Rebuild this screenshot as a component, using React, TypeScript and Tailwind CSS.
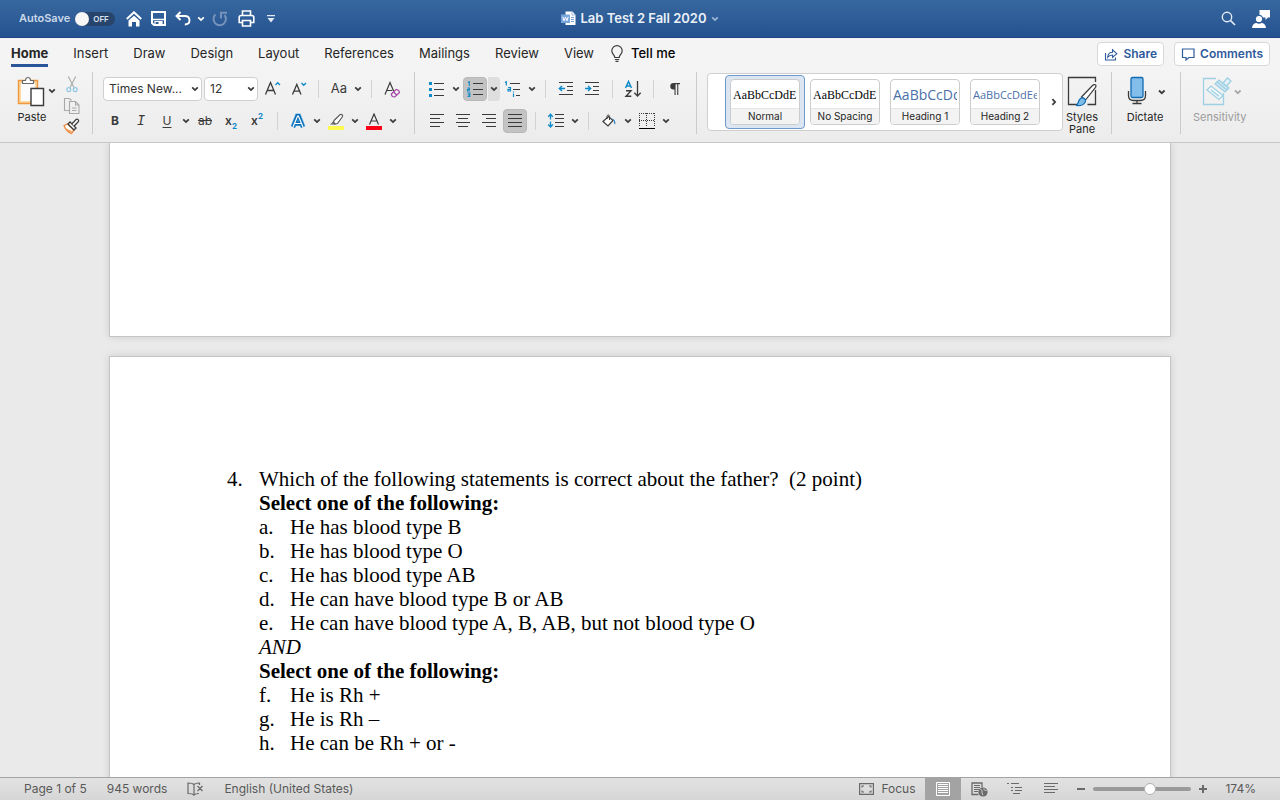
import React from 'react';
import clsx from 'clsx';

const INK = '#3b3b3b';
const BLUE = '#0f8ac8';

/* ---------- Small building blocks ---------- */

const Chevron: React.FC<{ className?: string }> = ({ className }) => (
  <svg width="8" height="6" viewBox="0 0 8 6" fill="none" stroke="currentColor" strokeWidth="1.8" className={className}>
    <path d="M1.2 1.4 4 4.1l2.8-2.7" />
  </svg>
);

interface ToolProps {
  label: string;
  active?: boolean;
  children: React.ReactNode;
}

const Tool: React.FC<ToolProps> = ({ label, active, children }) => (
  <button
    type="button"
    aria-label={label}
    className={clsx(
      'flex h-6 shrink-0 items-center justify-center text-[#3b3b3b]',
      active ? 'mx-px w-6 rounded-sm border border-[#b8b8b8] bg-[#c3c3c3]' : 'w-[26px]'
    )}
  >
    {children}
  </button>
);

const MenuArrow: React.FC<{ label: string; active?: boolean }> = ({ label, active }) => (
  <button
    type="button"
    aria-label={label}
    className={clsx('flex h-6 w-3 shrink-0 items-center justify-center text-[#3b3b3b]', active && 'rounded-r-sm bg-[#dedede]')}
  >
    <Chevron />
  </button>
);

const Divider = () => <div className="mx-[7px] h-[18px] w-px shrink-0 bg-[#d2d2d2]" />;

const GroupDivider: React.FC<{ className?: string }> = ({ className }) => (
  <div className={clsx('h-[62px] w-px shrink-0 bg-[#cbcbcb]', className)} />
);

// Horizontal strokes used by the list and alignment icons: [x1, x2, y]
const Lines: React.FC<{ rows: number[][]; color?: string }> = ({ rows, color = INK }) => (
  <g stroke={color} strokeWidth="1" shapeRendering="crispEdges">
    {rows.map(([x1, x2, y]) => (
      <line key={`${x1}-${y}`} x1={x1} x2={x2} y1={y + 0.5} y2={y + 0.5} />
    ))}
  </g>
);

const LineIcon: React.FC<{ rows: number[][]; children?: React.ReactNode }> = ({ rows, children }) => (
  <svg width="18" height="16" viewBox="0 0 18 16" fill="none">
    <Lines rows={rows} />
    {children}
  </svg>
);

/* ---------- Title bar ---------- */

const TitleBar = () => (
  <header className="grid h-[38px] shrink-0 grid-cols-[1fr_auto_1fr] items-center border-b border-[#1f4680] bg-linear-to-b from-[#38689f] to-[#245290] text-white">
    <div className="flex items-center pl-[19px]">
      <label className="flex items-center gap-[5px] text-[11px] font-semibold text-[#cbd8e8]">
        AutoSave
        <input type="checkbox" className="sr-only" />
        <span className="flex h-[14px] w-10 items-center gap-1 rounded-full bg-[#27446c] text-[8px] text-[#dbe3ee]">
          <span className="size-[14px] rounded-full bg-[#f6f6f6]" />
          OFF
        </span>
      </label>
      <div className="ml-1.5 flex items-center">
        <button type="button" aria-label="Home" className="flex w-[25px] justify-center">
          <svg width="16" height="16" viewBox="0 0 16 16" fill="none" stroke="#fff">
            <path d="M.8 8 8 1.3 15.200 8" strokeWidth="2" />
            <path d="M2.500 9.500 8 4.700l5.500 4.800V15.500H10v-4.500H6v4.500H2.500z" fill="#fff" stroke="none" />
          </svg>
        </button>
        <button type="button" aria-label="Save" className="flex w-[25px] justify-center">
          <svg width="15" height="15" viewBox="0 0 15 15" fill="none">
            <path d="M1 1h13v13H3l-2-2z" stroke="#fff" strokeWidth="2" />
            <path d="M1 8.500h13" stroke="#fff" strokeWidth="1.500" />
            <path d="M4 14v-3.500h7V14" stroke="#fff" strokeWidth="1.200" />
            <path d="M7.500 11h3.500v3.500H7.500z" fill="#fff" />
          </svg>
        </button>
        <button type="button" aria-label="Undo" className="flex w-6 justify-center">
          <svg width="16" height="15" viewBox="0 0 16 15" fill="none" stroke="#fff" strokeWidth="1.900">
            <path d="M5.500 1 1.500 5l4 4M2 5h7.500c3 0 5 1.800 5 4.300 0 2.600-2 4.200-4.700 4.200" />
          </svg>
        </button>
        <button type="button" aria-label="Undo history" className="flex w-3 justify-center">
          <Chevron />
        </button>
        <button type="button" aria-label="Repeat" disabled className="flex w-[26px] justify-center">
          <svg width="16" height="16" viewBox="0 0 16 16" fill="none" stroke="#7793bb" strokeWidth="2">
            <path d="M3.500 3.400A6.200 6.200 0 1 0 12.500 4M9 7.500V1.800h6" />
          </svg>
        </button>
        <button type="button" aria-label="Print" className="flex w-[26px] justify-center">
          <svg width="17" height="17" viewBox="0 0 17 17" fill="none" stroke="#fff" strokeWidth="1.600">
            <path d="M4.500 5.500V1h8v4.500M4 12.500H1.200v-5c0-1.200.7-2 2-2h10.600c1.300 0 2 .8 2 2v5H13" />
            <path d="M4.500 10.500h8V16h-8z" />
          </svg>
        </button>
        <button type="button" aria-label="Customize toolbar" className="flex w-6 justify-center">
          <svg width="8" height="8" viewBox="0 0 8 8" fill="#e3eaf3">
            <path d="M0 0h8v1.300H0zM.5 3h7L4 7.500z" />
          </svg>
        </button>
      </div>
    </div>

    <button type="button" className="flex items-center gap-1 text-[13px] font-semibold text-[#eaf0f7]">
      <svg width="15" height="15" viewBox="0 0 15 15">
        <path d="M4.500.5h7L14.500 4v10h-10z" fill="#fff" />
        <path d="M11 .5V4h3.500" fill="none" stroke="#9db7d8" />
        <path d="M10 6.500h3M10 8.500h3M10 10.500h3" stroke="#7ea3d2" />
        <path d="M0 3.500h9v8.500H0z" fill="#78a6dc" />
        <path d="M1.800 5.800 3 9.800l1.500-3.600L6 9.800l1.200-4" fill="none" stroke="#fff" />
      </svg>
      <span className="pt-px">Lab Test 2 Fall 2020</span>
      <Chevron className="text-[#9ab4d6]" />
    </button>

    <div className="flex items-center justify-end gap-4 pr-2.5">
      <button type="button" aria-label="Search">
        <svg width="15" height="15" viewBox="0 0 15 15" fill="none" stroke="#e4ebf4" strokeWidth="1.400">
          <circle cx="6" cy="6" r="4.700" />
          <path d="m9.500 9.500 4.500 4.500" strokeWidth="1.700" />
        </svg>
      </button>
      <button type="button" aria-label="Account">
        <svg width="18" height="18" viewBox="0 0 18 18" fill="#fff">
          <path d="M7.500 0H18v7.500h-2L13.500 10V7.500H11A4 4 0 0 0 7.500 4.800z" />
          <circle cx="7" cy="9" r="3.100" />
          <path d="M0 18c.3-3.300 2.300-5 4.500-5 1.400 1 3.600 1 5 0 2.200 0 4.200 1.700 4.500 5z" />
        </svg>
      </button>
    </div>
  </header>
);

/* ---------- Tabs ---------- */

const tabs = ['Home', 'Insert', 'Draw', 'Design', 'Layout', 'References', 'Mailings', 'Review', 'View'];

const TabBar = () => (
  <div className="flex h-[30px] shrink-0 items-center bg-[#f4f4f4] pr-2.5 pl-[11px] text-[13px]">
    <nav className="flex h-full items-center gap-[25px] text-[#262626]">
      {tabs.map((tab) => (
        <button
          key={tab}
          type="button"
          className={clsx('h-[28px] border-b-[3px] pt-[5px]', tab === 'Home' ? 'border-[#2a5699] font-bold' : 'border-transparent')}
        >
          {tab}
        </button>
      ))}
    </nav>
    <button type="button" className="ml-[17px] flex items-center gap-2 font-medium text-black">
      <svg width="12" height="17" viewBox="0 0 12 17" fill="none" stroke={INK} strokeWidth="1.200">
        <path d="M3.800 12.500c0-2.300-3-3.500-3-6.700a5.200 5.200 0 0 1 10.400 0c0 3.200-3 4.400-3 6.700zM3.800 14.500h4.400M4.500 16.300h3" />
      </svg>
      <span className="pt-0.5">Tell me</span>
    </button>
    <div className="ml-auto flex gap-2.5 pt-0.5 text-[12px] font-semibold text-[#2f5a9b]">
      <button type="button" className="flex h-6 items-center gap-1 rounded-sm border border-[#d8d8d8] bg-white px-1.5">
        <svg width="15" height="13" viewBox="0 0 15 13" fill="none" stroke="currentColor" strokeWidth="1.100">
          <path d="M1.500 5v7h10V9.500" />
          <path d="M3.800 9.300c.2-3.300 2-5 4.700-5V1.800l4.300 3.900-4.300 3.700V7c-2 0-3.500.6-4.700 2.300z" />
        </svg>
        Share
      </button>
      <button type="button" className="flex h-6 items-center gap-1 rounded-sm border border-[#d8d8d8] bg-white px-1.5">
        <svg width="15" height="13" viewBox="0 0 15 13" fill="none" stroke="currentColor" strokeWidth="1.200">
          <path d="M1.500 1H13v8.500H8L5 12V9.500H1.500z" />
        </svg>
        Comments
      </button>
    </div>
  </div>
);

/* ---------- Ribbon groups ---------- */

const ClipboardGroup = () => (
  <div className="flex w-20 shrink-0 items-start pt-1">
    <button type="button" className="flex w-[30px] flex-col items-center gap-1 text-[11px] leading-3 text-[#262626]">
      <svg width="30" height="31" viewBox="0 0 30 31" fill="none">
        <path d="M1.500 4.500h19v23h-19z" fill="#fbd9a0" stroke="#f0963f" strokeWidth="1.400" />
        <path d="M4 7h14v18H4z" fill="#fbfbfb" />
        <path d="M5.500 7.500v-3h3c0-4 5-4 5 0h3v3z" fill="#fff" stroke="#6b6b6b" strokeWidth="1.200" />
        <path d="M14 12.500h12.500v17H14z" fill="#fff" stroke={INK} strokeWidth="1.400" />
      </svg>
      Paste
    </button>
    <button type="button" aria-label="Paste options" className="flex w-2.5 justify-center pt-3 text-[#3b3b3b]">
      <Chevron />
    </button>
    <div className="ml-1.5 flex flex-col items-center gap-1">
      <button type="button" aria-label="Cut" disabled>
        <svg width="12" height="17" viewBox="0 0 12 17" fill="none" strokeWidth="1.100">
          <path d="M2.300.5 8 11.500M9.700.5 4 11.500" stroke="#a9a9a9" />
          <circle cx="2.800" cy="13.600" r="2" stroke="#8cc5e4" />
          <circle cx="9.200" cy="13.600" r="2" stroke="#8cc5e4" />
        </svg>
      </button>
      <button type="button" aria-label="Copy" disabled>
        <svg width="17" height="17" viewBox="0 0 17 17" fill="none" stroke="#a9a9a9" strokeWidth="1.100">
          <path d="M6.500 13.500h-5V1.500h5l2 2" />
          <path d="M6.500 4.500h6l3.500 3.500v8.500H6.500zM12.500 4.500V8H16M9 11h4.500M9 13.500h4.500" />
        </svg>
      </button>
      <button type="button" aria-label="Format painter">
        <svg width="17" height="17" viewBox="0 0 17 17" fill="none">
          <path d="M1 7.500 4.500 6 11 12 8.500 15.500c-3-1-6-4-7.500-8z" fill="#fff" stroke="#f0853c" strokeWidth="1.300" />
          <path d="M3 10.500 9 13l-.8 2C6 14 4.300 12.500 3 10.500z" fill="#f6a25c" />
          <path d="m5 6 2-2 6 6-2 2z" fill="#fff" stroke={INK} strokeWidth="1.300" />
          <path d="m9 5.800 4.300-4.500c1.500-.5 2.700.7 2.200 2.200L11.200 8" fill="#fff" stroke={INK} strokeWidth="1.300" />
        </svg>
      </button>
    </div>
  </div>
);

interface ComboProps {
  label: string;
  value: string;
  className: string;
}

const Combo: React.FC<ComboProps> = ({ label, value, className }) => (
  <div className={clsx('relative shrink-0', className)}>
    <select
      aria-label={label}
      className="block h-6 w-full appearance-none rounded-sm border border-[#cfcfcf] bg-white pl-[5px] text-[12px] text-[#333333]"
    >
      <option>{value}</option>
    </select>
    <Chevron className="pointer-events-none absolute top-[9px] right-[3px] text-[#3b3b3b]" />
  </div>
);

const FontGroup = () => (
  <div className="flex shrink-0 flex-col gap-2 pt-[5px]">
    <div className="flex items-center">
      <div className="mr-px ml-px flex gap-0.5">
        <Combo label="Font" value="Times New..." className="w-[99px]" />
        <Combo label="Font size" value="12" className="w-[54px]" />
      </div>
      <Tool label="Increase font size">
        <svg width="17" height="16" viewBox="0 0 17 16" fill="none">
          <path d="M1.500 13.500 6.500 1.500l5 12M3.200 9.500h6.600" stroke={INK} strokeWidth="1.300" />
          <path d="m11.500 4 2.200-2.200L16 4" stroke={BLUE} strokeWidth="1.400" />
        </svg>
      </Tool>
      <Tool label="Decrease font size">
        <svg width="17" height="16" viewBox="0 0 17 16" fill="none">
          <path d="M2.500 13.500 6.800 3.500l4.200 10M3.900 10.200h5.600" stroke={INK} strokeWidth="1.300" />
          <path d="m11.500 2 2.200 2.200L16 2" stroke={BLUE} strokeWidth="1.400" />
        </svg>
      </Tool>
      <Divider />
      <Tool label="Change case">
        <span className="text-[13px]">Aa</span>
      </Tool>
      <MenuArrow label="Change case options" />
      <Divider />
      <Tool label="Clear formatting">
        <svg width="17" height="17" viewBox="0 0 17 17" fill="none">
          <path d="M1 13.500 6 1.500l3.600 8.500M2.700 9.500h5.500" stroke={INK} strokeWidth="1.200" />
          <path d="m7.300 13 4.700-4.500c1.600-.2 3.300 1.300 3.500 3L10.800 16c-1.700 0-3.400-1.300-3.500-3z" fill="#f0f0f0" stroke="#a345a8" strokeWidth="1.200" />
          <path d="m9.500 11 3.300 3" stroke="#a345a8" strokeWidth="1.200" />
        </svg>
      </Tool>
    </div>
    <div className="flex items-center text-[12px]">
      <Tool label="Bold">
        <span className="font-bold">B</span>
      </Tool>
      <Tool label="Italic">
        <span className="font-['Liberation_Mono'] text-[14px] italic">I</span>
      </Tool>
      <Tool label="Underline">
        <span className="underline underline-offset-2">U</span>
      </Tool>
      <MenuArrow label="Underline options" />
      <Tool label="Strikethrough">
        <span className="line-through">ab</span>
      </Tool>
      <Tool label="Subscript">
        <span className="font-semibold">x</span>
        <span className="pt-2.5 text-[8px] font-bold text-[#0f8ac8]">2</span>
      </Tool>
      <Tool label="Superscript">
        <span className="font-semibold">x</span>
        <span className="pb-2.5 text-[8px] font-bold text-[#0f8ac8]">2</span>
      </Tool>
      <Divider />
      <Tool label="Text effects">
        <svg width="16" height="16" viewBox="0 0 16 16" fill="none">
          <path d="M3 14 7.300 3h1.400L13 14M5 10.500h6" stroke="#6cb8e6" strokeWidth="5" />
          <path d="M3 14 7.300 3h1.400L13 14M5 10.500h6" stroke="#0a6fb8" strokeWidth="3.800" />
          <path d="M3 14 7.600 3h.8L13 14M5 10.500h6" stroke="#fff" strokeWidth="1.200" />
        </svg>
      </Tool>
      <MenuArrow label="Text effects options" />
      <Tool label="Highlight">
        <svg width="16" height="17" viewBox="0 0 16 17" fill="none">
          <path d="M0 13h16v4H0z" fill="#fdfb4f" />
          <path d="M2 11.500 5.500 8l2.500 3-1 .7z" fill="#777" />
          <path d="M6 7.500 12.200 1.500c1.500-.5 2.800.5 2.300 2L9.500 10.500l-2.500.3L5.500 9z" fill="#fff" stroke="#5b5b5b" strokeWidth="1.200" />
        </svg>
      </Tool>
      <MenuArrow label="Highlight options" />
      <Tool label="Font color">
        <svg width="16" height="17" viewBox="0 0 16 17" fill="none">
          <path d="M0 13h16v4H0z" fill="#fb0015" />
          <path d="M3.500 11.500 8 1l4.500 10.500M5 8h6" stroke={INK} strokeWidth="1.200" />
        </svg>
      </Tool>
      <MenuArrow label="Font color options" />
    </div>
  </div>
);

const ParagraphGroup = () => (
  <div className="flex shrink-0 flex-col gap-2 pt-[5px]">
    <div className="flex items-center">
      <Tool label="Bullets">
        <LineIcon rows={[[6, 16, 2], [6, 16, 8], [6, 16, 14]]}>
          <path d="M1 1h3v3H1zM1 7h3v3H1zM1 13h3v3H1z" fill={BLUE} />
        </LineIcon>
      </Tool>
      <MenuArrow label="Bullet options" />
      <Tool label="Numbering" active>
        <LineIcon rows={[[7, 17, 2], [7, 17, 8], [7, 17, 13]]}>
          <path d="M2 1.500 3.300.7V5M1.500 7h2v1.500h-2V10h2.500M1.500 12h2.300v3.400H1.500M2 13.700h1.800" stroke={BLUE} strokeWidth="1.100" />
        </LineIcon>
      </Tool>
      <MenuArrow label="Numbering options" active />
      <Tool label="Multilevel list">
        <LineIcon rows={[[6, 16, 2], [9, 16, 8], [12, 16, 14]]}>
          <path d="M1 1.500 2.300.7V4.500M4 6.500h2.500V10H4V8.300h2.500M9.500 12.500V16M9.500 10.500v1" stroke={BLUE} strokeWidth="1.200" />
        </LineIcon>
      </Tool>
      <MenuArrow label="Multilevel options" />
      <Divider />
      <Tool label="Decrease indent">
        <LineIcon rows={[[2, 16, 1], [10, 16, 5], [10, 16, 9], [2, 16, 13]]}>
          <path d="M8 7.500H2.500M5 5 2.300 7.500 5 10" stroke={BLUE} strokeWidth="1.400" />
        </LineIcon>
      </Tool>
      <Tool label="Increase indent">
        <LineIcon rows={[[2, 16, 1], [10, 16, 5], [10, 16, 9], [2, 16, 13]]}>
          <path d="M2 7.500h5.500M5 5l2.700 2.500L5 10" stroke={BLUE} strokeWidth="1.400" />
        </LineIcon>
      </Tool>
      <Divider />
      <Tool label="Sort">
        <svg width="18" height="18" viewBox="0 0 18 18" fill="none">
          <path d="M1.500 8 4.500 1.500 7.500 8M2.600 6h3.800" stroke={BLUE} strokeWidth="1.500" />
          <path d="M2 10.700h5L2 16.300h5.300" stroke={INK} strokeWidth="1.400" />
          <path d="M13.500 1v15M10.300 12.700l3.200 3.300 3.200-3.300" stroke={INK} strokeWidth="1.300" />
        </svg>
      </Tool>
      <Divider />
      <Tool label="Show paragraph marks">
        <svg width="11" height="14" viewBox="0 0 11 14" fill={INK}>
          <path d="M4.500 1H11v1.200H9.300V13H8.200V2.200H6.600V13H5.500V7.500h-1a3.250 3.250 0 0 1 0-6.500z" />
        </svg>
      </Tool>
    </div>
    <div className="flex items-center">
      <Tool label="Align left">
        <LineIcon rows={[[2, 16, 1], [2, 12, 5], [2, 16, 9], [2, 12, 13]]} />
      </Tool>
      <Tool label="Align center">
        <LineIcon rows={[[2, 16, 1], [4, 14, 5], [2, 16, 9], [4, 14, 13]]} />
      </Tool>
      <Tool label="Align right">
        <LineIcon rows={[[2, 16, 1], [6, 16, 5], [2, 16, 9], [6, 16, 13]]} />
      </Tool>
      <Tool label="Justify" active>
        <LineIcon rows={[[2, 16, 1], [2, 16, 5], [2, 16, 9], [2, 16, 13]]} />
      </Tool>
      <Divider />
      <Tool label="Line spacing">
        <LineIcon rows={[[8, 17, 1], [8, 17, 5], [8, 17, 9], [8, 17, 13]]}>
          <path d="M3.500 1.500v5M1.200 3.700l2.300-2.500 2.300 2.500M3.500 8.500v5M1.200 11.500 3.500 14l2.300-2.500" stroke={BLUE} strokeWidth="1.300" />
        </LineIcon>
      </Tool>
      <MenuArrow label="Line spacing options" />
      <Divider />
      <Tool label="Shading">
        <svg width="14" height="14" viewBox="0 0 14 14" fill="none">
          <path d="M1 7.500 6.500 2.500l4.500 4L6 12z" fill="#fff" stroke={INK} strokeWidth="1.200" />
          <path d="M5 5V2.500c0-2 2.500-2 2.500 0V6" stroke={INK} />
          <path d="M10 4.500c2.500.5 3.800 2.800 3.300 6-1-.3-1.500-1.500-1.300-3z" fill="#2b7fc0" />
        </svg>
      </Tool>
      <MenuArrow label="Shading options" />
      <Tool label="Borders">
        <svg width="16" height="16" viewBox="0 0 16 16" fill="none" stroke={INK} shapeRendering="crispEdges">
          <path d="M.5 0v14M15.500 0v14M0 .5h16M0 7.500h16M7.500 0v14" strokeDasharray="1 1" />
          <path d="M0 15.500h16" stroke="#000" />
        </svg>
      </Tool>
      <MenuArrow label="Border options" />
    </div>
  </div>
);

const styles = [
  { name: 'Normal', sample: 'AaBbCcDdE', look: "font-['Liberation_Serif',serif] text-[12px] text-black" },
  { name: 'No Spacing', sample: 'AaBbCcDdE', look: "font-['Liberation_Serif',serif] text-[12px] text-black" },
  { name: 'Heading 1', sample: 'AaBbCcDd', look: "font-['Open_Sans',sans-serif] text-[14px] text-[#4a70a8]" },
  { name: 'Heading 2', sample: 'AaBbCcDdEe', look: "font-['Open_Sans',sans-serif] text-[11px] text-[#4a70a8]" },
];

const StyleGallery = () => (
  <div className="mt-px flex h-[58px] shrink-0 items-center rounded-sm border border-[#cfcfcf] bg-white pl-[17px]">
    {styles.map((style) => (
      <button
        key={style.name}
        type="button"
        className={clsx(
          'h-[54px] w-20 rounded-sm border px-1 py-[3px]',
          style.name === 'Normal' ? 'border-[#6f9aca] bg-[#dbe6f2]' : 'border-transparent'
        )}
      >
        <span className="flex h-[46px] flex-col overflow-hidden rounded-sm border border-[#cccccc] bg-white">
          <span className={clsx('mx-0.5 h-[30px] overflow-hidden text-left leading-[30px] whitespace-nowrap', style.look)}>
            {style.sample}
          </span>
          <span className="border-t border-[#e6e6e6] bg-[#f3f3f3] pb-px text-center text-[10px] leading-[14px] text-[#262626]">
            {style.name}
          </span>
        </span>
      </button>
    ))}
    <button type="button" aria-label="More styles" className="flex w-[17px] justify-center text-[#3b3b3b]">
      <Chevron className="-rotate-90" />
    </button>
  </div>
);

const ribbonLabel = 'flex flex-col items-center gap-1 text-[11px] leading-3';

const Ribbon = () => (
  <div className="flex h-[75px] shrink-0 items-start overflow-hidden border-b border-[#c6c6c6] bg-linear-to-b from-[#f4f4f4] to-[#ececec] pt-1 pl-[17px]">
    <ClipboardGroup />
    <GroupDivider className="mr-[9px] -ml-[5px]" />
    <FontGroup />
    <GroupDivider className="mx-[9px]" />
    <ParagraphGroup />
    <GroupDivider className="mr-2.5 ml-[9px]" />
    <StyleGallery />
    <button type="button" className={clsx(ribbonLabel, 'w-[38px] shrink-0 pt-1 text-[#262626]')}>
      <svg width="32" height="31" viewBox="0 0 32 31" fill="none">
        <path d="M11 28.500H2.500v-27h27V6M29.500 14v14.500h-8" stroke={INK} strokeWidth="1.300" />
        <path d="m15.500 21 11-11.500c2-2 4.500-.5 3 1.800L19.500 24z" fill="#fff" stroke={INK} strokeWidth="1.200" />
        <path d="M10 29.500c3-.5 1.500-6.500 5.500-7.500 3-.5 5 2 3.500 4.500s-5 3.500-9 3z" fill="#7fbce8" stroke="#0f6cb4" strokeWidth="1.200" />
      </svg>
      <span>
        Styles
        <br />
        Pane
      </span>
    </button>
    <GroupDivider className="mr-3.5 ml-2.5" />
    <button type="button" className={clsx(ribbonLabel, 'w-[38px] shrink-0 pt-1 text-[#262626]')}>
      <svg width="52" height="31" viewBox="0 0 52 31" fill="none">
        <path d="M9.500 15v4.500c0 3 2 5 5 5h7c3 0 5-2 5-5V15M18 24.500v3M13.500 27.500h9" stroke={INK} strokeWidth="1.300" />
        <path d="M12 3c0-1 .6-1.500 1.500-1.500h9c.9 0 1.500.5 1.500 1.500v17c0 1-.6 1.500-1.500 1.500h-9c-.9 0-1.500-.5-1.500-1.500z" fill="#83bdea" stroke="#0f6cb4" strokeWidth="1.300" />
        <path d="m40 14.500 2.800 2.700 2.800-2.700" stroke={INK} strokeWidth="1.800" />
      </svg>
      Dictate
    </button>
    <GroupDivider className="mr-3 ml-4" />
    <button type="button" disabled className={clsx(ribbonLabel, 'shrink-0 pt-1 text-[#9b9b9b]')}>
      <svg width="52" height="31" viewBox="0 0 52 31" fill="none" stroke="#9fd0e3" strokeWidth="1.300">
        <path d="M22 2.500H9.500v26h20V17" />
        <path d="m13 14 4-4 12 9.500-4 4z" fill="#f0f8fb" />
        <path d="m17 14 8 6.300" />
        <path d="m21 8 4-4 10 8-4 4z" fill="#cbe6f0" />
        <path d="m29 7 4.500-5 3.500 3-4.500 5z" fill="#e4f2f8" />
        <path d="m23 6 10 8" />
        <path d="m41 14.500 2.800 2.700 2.800-2.700" stroke="#a9a9a9" strokeWidth="1.800" />
      </svg>
      Sensitivity
    </button>
  </div>
);

/* ---------- Document ---------- */

const bloodTypes = [
  ['a.', 'He has blood type B'],
  ['b.', 'He has blood type O'],
  ['c.', 'He has blood type AB'],
  ['d.', 'He can have blood type B or AB'],
  ['e.', 'He can have blood type A, B, AB, but not blood type O'],
];

const rhFactors = [
  ['f.', 'He is Rh +'],
  ['g.', 'He is Rh –'],
  ['h.', 'He can be Rh + or -'],
];

const AnswerList: React.FC<{ items: string[][] }> = ({ items }) => (
  <ol>
    {items.map(([marker, text]) => (
      <li key={marker} className="flex">
        <span className="w-[31px] shrink-0">{marker}</span>
        <span>{text}</span>
      </li>
    ))}
  </ol>
);

const pageClass = 'mx-auto w-full max-w-[1062px] shrink-0 border border-[#c4c4c4] bg-white shadow-[0_0_8px_rgba(0,0,0,0.12)]';

const DocumentView = () => (
  <main className="flex min-h-0 flex-1 flex-col gap-[19px] overflow-hidden bg-[#eaeaea]">
    <section className={clsx(pageClass, 'h-[194px] border-t-0')} />
    <section className={clsx(pageClass, "flex px-[117px] pt-[110px] pb-40 font-['Liberation_Serif',serif] text-[21px] leading-6 text-black")}>
      <span className="w-8 shrink-0">4.</span>
      <div>
        <p className="whitespace-pre-wrap">{'Which of the following statements is correct about the father?  (2 point)'}</p>
        <p className="font-bold">Select one of the following:</p>
        <AnswerList items={bloodTypes} />
        <p className="italic">AND</p>
        <p className="font-bold">Select one of the following:</p>
        <AnswerList items={rhFactors} />
      </div>
    </section>
  </main>
);

/* ---------- Status bar ---------- */

const GREY = '#6a6a6a';

const StatusBar = () => (
  <footer className="flex h-[23px] shrink-0 items-center justify-between border-t border-[#a3a3a3] bg-linear-to-b from-[#e2e2e2] to-[#d6d6d6] pl-6 text-[12px] text-[#595959]">
    <div className="flex items-center gap-5">
      <span>Page 1 of 5</span>
      <span>945 words</span>
      <button type="button" aria-label="Proofing">
        <svg width="17" height="14" viewBox="0 0 17 14" fill="none" stroke={GREY} strokeWidth="1.200">
          <path d="M7 2.500C5.500 1 3.500 1 1 1v10.500c2.500 0 4.500 0 6 1.500 1-1 2.500-1.500 5-1.500M7 2.500V13M7 2.500C8.300 1.200 10 1 12.500 1v2M10.500 4l5 5M15.500 4l-5 5" />
        </svg>
      </button>
      <span>English (United States)</span>
    </div>
    <div className="flex h-full items-center pr-6">
      <button type="button" className="mr-2.5 flex items-center gap-[7px]">
        <svg width="15" height="12" viewBox="0 0 15 12" fill="none" stroke={GREY} strokeWidth="1.200">
          <path d="M.6.600h13.800v10.800H.6z" />
          <path d="M3 4.500V3h2M10 3h2v1.500M12 7.500V9h-2M5 9H3V7.500" />
        </svg>
        Focus
      </button>
      <button type="button" aria-label="Print layout" className="flex h-full w-9 items-center justify-center bg-[#a3a3a3]">
        <svg width="14" height="14" viewBox="0 0 14 14" fill="none">
          <path d="M.5.500h13v13H.5z" stroke="#fff" />
          <Lines rows={[[2, 12, 2], [2, 12, 4], [2, 12, 6], [2, 12, 8], [2, 12, 10]]} color="#fff" />
        </svg>
      </button>
      <button type="button" aria-label="Web layout" className="flex w-9 justify-center">
        <svg width="17" height="15" viewBox="0 0 17 15" fill="none">
          <path d="M7.500 12.500H1V1h10v4.500" stroke={GREY} strokeWidth="1.300" />
          <Lines rows={[[3, 9, 3], [3, 9, 5], [3, 8, 7], [3, 7, 9]]} color={GREY} />
          <circle cx="12" cy="10" r="4.600" fill={GREY} />
          <path d="M9.500 7.500c1 .3 2 1.200 1.500 2.500s1 1.500.5 3M13 6.500c-.5 1.500 1 2 2.500 2" stroke="#ddd" />
        </svg>
      </button>
      <button type="button" aria-label="Outline" className="flex w-9 justify-center">
        <svg width="16" height="12" viewBox="0 0 16 12" fill="none">
          <Lines rows={[[0, 2, 0], [4, 12, 0], [4, 6, 4], [8, 15, 4], [4, 6, 7], [8, 15, 7], [6, 13, 10]]} color={GREY} />
        </svg>
      </button>
      <button type="button" aria-label="Draft" className="flex w-9 justify-center">
        <svg width="14" height="12" viewBox="0 0 14 12" fill="none">
          <Lines rows={[[0, 14, 0], [0, 11, 3], [0, 14, 6], [0, 11, 9]]} color={GREY} />
        </svg>
      </button>
      <button type="button" aria-label="Zoom out" className="ml-1 flex w-4 justify-center">
        <svg width="8" height="8" viewBox="0 0 8 8" fill={GREY}>
          <path d="M0 3h8v2H0z" />
        </svg>
      </button>
      <input
        type="range"
        aria-label="Zoom"
        min={0}
        max={100}
        defaultValue={59}
        className="mx-1 h-3 w-[98px] appearance-none bg-transparent [&::-webkit-slider-runnable-track]:h-1 [&::-webkit-slider-runnable-track]:rounded-full [&::-webkit-slider-runnable-track]:bg-[#9a9a9a] [&::-webkit-slider-thumb]:-mt-1 [&::-webkit-slider-thumb]:size-3 [&::-webkit-slider-thumb]:appearance-none [&::-webkit-slider-thumb]:rounded-full [&::-webkit-slider-thumb]:border [&::-webkit-slider-thumb]:border-[#b0b0b0] [&::-webkit-slider-thumb]:bg-white"
      />
      <button type="button" aria-label="Zoom in" className="mr-3.5 flex w-4 justify-center">
        <svg width="8" height="8" viewBox="0 0 8 8" fill={GREY}>
          <path d="M0 3h3V0h2v3h3v2H5v3H3V5H0z" />
        </svg>
      </button>
      <span>174%</span>
    </div>
  </footer>
);

const App: React.FC = () => (
  <div className="flex h-screen flex-col overflow-hidden font-['Inter',sans-serif]">
    <TitleBar />
    <TabBar />
    <Ribbon />
    <DocumentView />
    <StatusBar />
  </div>
);

export default App;
